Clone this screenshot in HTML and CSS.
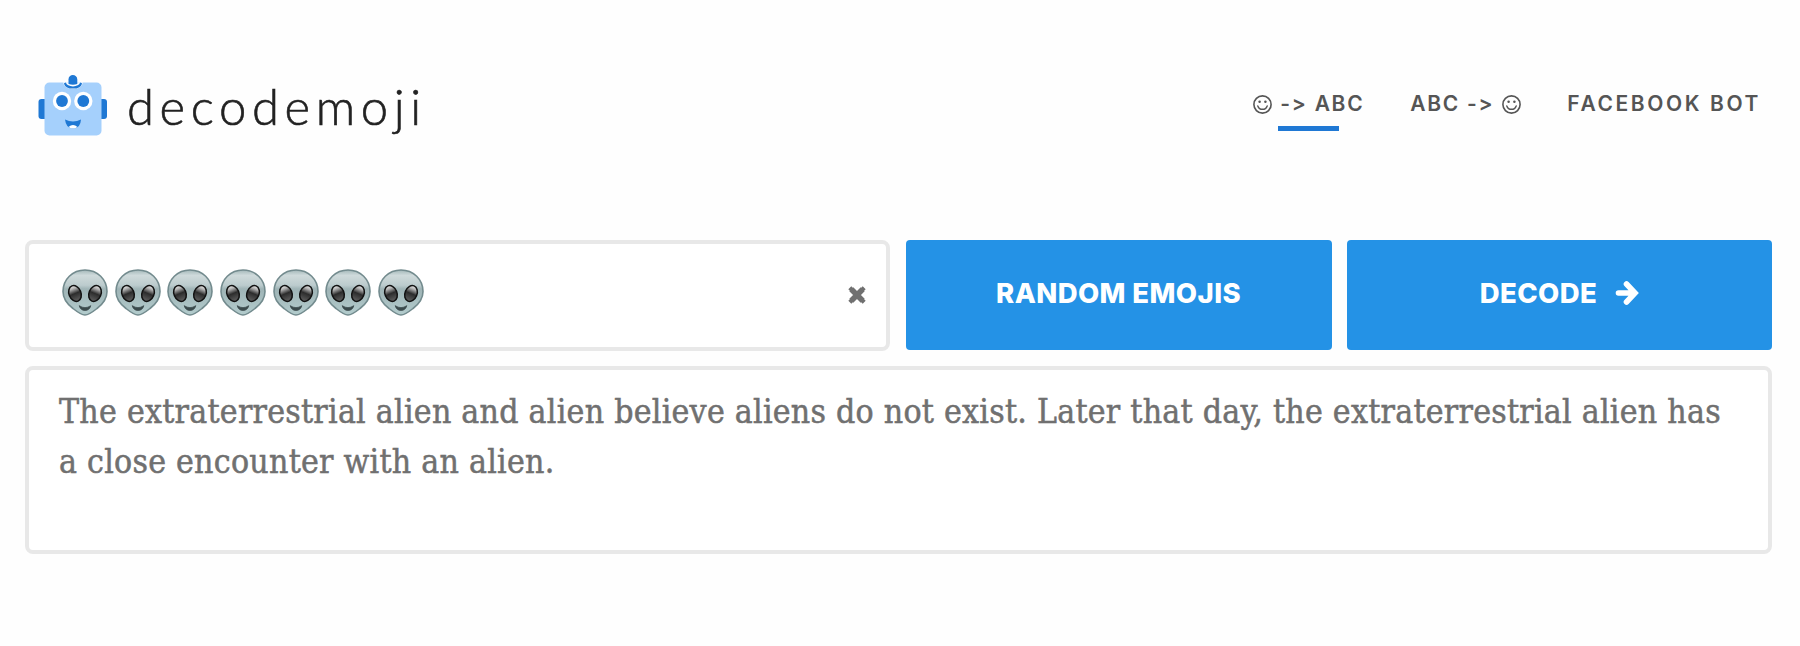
FILE: index.html
```html
<!DOCTYPE html>
<html lang="en">
<head>
    <meta charset="UTF-8">
    <meta name="viewport" content="width=device-width, initial-scale=1.0">
    <title>decodemoji</title>
    <link rel="stylesheet" href="styles.css">
</head>
<body>
    <svg class="sprite" width="0" height="0">
        <defs>
            <linearGradient id="skin" x1="0" y1="0" x2="0" y2="1">
                <stop offset="0" stop-color="#a3b7b9"/>
                <stop offset="0.12" stop-color="#cfdadb"/>
                <stop offset="0.34" stop-color="#bccbcd"/>
                <stop offset="0.42" stop-color="#9fb4b6"/>
                <stop offset="1" stop-color="#b3cccd"/>
            </linearGradient>
            <linearGradient id="eye" x1="0" y1="0" x2="0" y2="1">
                <stop offset="0" stop-color="#f0f0f0"/>
                <stop offset="0.2" stop-color="#b0b0b0"/>
                <stop offset="0.5" stop-color="#2c2c2c"/>
                <stop offset="1" stop-color="#606060"/>
            </linearGradient>
            <symbol id="alien" viewBox="0 0 46 47">
                <path d="M23 1C10.500 1 1 10.500 1 22.500C1 30 5 35 11 39.500C16 43.500 19.500 46 23 46C26.500 46 30 43.500 35 39.500C41 35 45 30 45 22.500C45 10.500 35.500 1 23 1Z" fill="url(#skin)" stroke="#738b8e" stroke-width="1.600"/>
                <ellipse cx="13" cy="24.500" rx="6" ry="8.200" transform="rotate(-22 13 24.500)" fill="url(#eye)" stroke="#111" stroke-width="1.500"/>
                <ellipse cx="33" cy="24.500" rx="6" ry="8.200" transform="rotate(22 33 24.500)" fill="url(#eye)" stroke="#111" stroke-width="1.500"/>
                <path d="M17.200 36.700Q23 40.600 28.800 36.700Q27.500 41.400 23 41.400Q18.500 41.400 17.200 36.700Z" fill="#3b4a4c" stroke="#3b4a4c" stroke-width="0.800" stroke-linejoin="round"/>
            </symbol>
            <symbol id="smiley" viewBox="0 0 19 19">
                <circle cx="9.500" cy="9.500" r="8.600" fill="none" stroke="#555" stroke-width="1.600"/>
                <circle cx="6.600" cy="6.800" r="1.250" fill="#555"/>
                <circle cx="12.400" cy="6.800" r="1.250" fill="#555"/>
                <path d="M4.800 10.900Q6 14.300 9.500 14.300Q13 14.300 14.200 10.900" fill="none" stroke="#555" stroke-width="1.400" stroke-linecap="round"/>
            </symbol>
        </defs>
    </svg>

    <header class="header">
        <a class="logo">
            <svg class="robot" width="70" height="62" viewBox="0 0 70 62">
                <rect x="0.500" y="24" width="9" height="20" rx="3" fill="#1f78d4"/>
                <rect x="60" y="24" width="9" height="20" rx="3" fill="#1f78d4"/>
                <rect x="6.500" y="7.500" width="57" height="53" rx="5" fill="#a5d0fc"/>
                <path d="M25 7.500H45C43.500 12 40 14 35 14C30 14 26.500 12 25 7.500Z" fill="#fff"/>
                <path d="M26.800 8C28 11.200 31 12.500 35 12.500C39 12.500 42 11.200 43.200 8" fill="none" stroke="#1f78d4" stroke-width="2.200"/>
                <path d="M30.500 9V4.500C30.500 1.500 32.500 0 34.800 0C37.200 0 39.300 1.500 39.300 4.500V9Q35 10.500 30.500 9Z" fill="#1f78d4"/>
                <circle cx="24" cy="26" r="9.200" fill="#fff"/>
                <circle cx="45.300" cy="26" r="9.200" fill="#fff"/>
                <circle cx="24" cy="26" r="5.900" fill="#1f78d4"/>
                <circle cx="45.300" cy="26" r="5.900" fill="#1f78d4"/>
                <path d="M27 44.500Q35 48.500 43 44.500Q42.500 53.500 35 53.500Q28 53.500 27 44.500Z" fill="#1f78d4"/>
                <path d="M30.500 52Q35 48 39.500 52Q35 55 30.500 52Z" fill="#fff"/>
            </svg>
            <span class="logo-text">decodemoji</span>
        </a>
        <nav class="nav">
            <a class="nav-item active"><svg class="smiley"><use href="#smiley"/></svg><span>-&gt; ABC</span></a>
            <a class="nav-item"><span>ABC -&gt;</span><svg class="smiley"><use href="#smiley"/></svg></a>
            <a class="nav-item nav-bot"><span>FACEBOOK BOT</span></a>
        </nav>
    </header>

    <main class="main">
        <div class="controls">
            <div class="emoji-input">
                <div class="emojis">
                    <svg><use href="#alien"/></svg>
                    <svg><use href="#alien"/></svg>
                    <svg><use href="#alien"/></svg>
                    <svg><use href="#alien"/></svg>
                    <svg><use href="#alien"/></svg>
                    <svg><use href="#alien"/></svg>
                    <svg><use href="#alien"/></svg>
                </div>
                <svg class="clear" width="18" height="18" viewBox="0 0 18 18">
                    <path d="M3.300 3.300L14.700 14.700M14.700 3.300L3.300 14.700" stroke="#707070" stroke-width="4.200" stroke-linecap="square"/>
                    <path d="M3.300 3.300L14.700 14.700M14.700 3.300L3.300 14.700" stroke="#707070" stroke-width="5.600"/>
                </svg>
            </div>
            <button class="btn btn-random">RANDOM EMOJIS</button>
            <button class="btn btn-decode">
                <span>DECODE</span>
                <svg width="24" height="26" viewBox="0 0 24 26">
                    <path d="M3.500 13H19M11.500 4L20 13L11.500 22" fill="none" stroke="#fff" stroke-width="5.600" stroke-linecap="round" stroke-linejoin="miter"/>
                </svg>
            </button>
        </div>
        <div class="result">The extraterrestrial alien and alien believe aliens do not exist. Later that day, the extraterrestrial alien has<br>a close encounter with an alien.</div>
    </main>
</body>
</html>
```
FILE: styles.css
```css
* {
    box-sizing: border-box;
}
body {
    margin: 0;
    background-color: #fefefe;
    font-family: Inter, "Liberation Sans", sans-serif;
}
.sprite {
    display: block;
}
.header {
    display: flex;
    justify-content: space-between;
    align-items: flex-start;
    height: 240px;
    padding: 75px 39px 0 38px;
}
.logo {
    display: flex;
}
.logo-text {
    margin-left: 19px;
    font-family: Lato, sans-serif;
    font-weight: 300;
    font-size: 49px;
    line-height: 63px;
    letter-spacing: 5.600px;
    color: #222;
    -webkit-text-stroke: 0.6px #222;
}
.nav {
    display: flex;
    padding-top: 16px;
    font-size: 21px;
    font-weight: 600;
    line-height: 26px;
    letter-spacing: 1.700px;
    color: #555;
    white-space: nowrap;
}
.nav-item {
    display: flex;
    align-items: center;
    gap: 8px;
    margin-left: 46px;
}
.nav-item.active {
    position: relative;
}
.nav-item.active::after {
    content: "";
    position: absolute;
    left: 25px;
    top: 35px;
    width: 61px;
    height: 5px;
    background-color: #1f78d4;
}
.nav-bot {
    letter-spacing: 2.600px;
}
.smiley {
    width: 19px;
    height: 19px;
}
.main {
    padding: 0 28px 0 25px;
}
.controls {
    display: grid;
    grid-template-columns: 865px 426px 425px;
    justify-content: space-between;
    height: 111px;
}
.emoji-input {
    display: flex;
    align-items: center;
    justify-content: space-between;
    padding: 0 20px 2px 33px;
    border: 4px solid #e8e8e8;
    border-radius: 8px;
    background-color: #fff;
}
.emojis {
    display: flex;
    gap: 6.700px;
    padding-bottom: 5px;
}
.emojis svg {
    width: 46px;
    height: 47px;
}
.btn {
    display: flex;
    align-items: center;
    justify-content: center;
    gap: 18px;
    height: 110px;
    padding: 0 0 4px;
    border: none;
    border-radius: 4px;
    background-color: #2492e6;
    color: #fff;
    font-family: inherit;
    font-size: 27.500px;
    font-weight: 800;
    letter-spacing: 0.4px;
    cursor: pointer;
}
.result {
    height: 188px;
    margin-top: 15px;
    padding: 17px 30px;
    border: 4px solid #e8e8e8;
    border-radius: 8px;
    background-color: #fff;
    color: #707070;
    font-family: "DejaVu Serif Condensed", "DejaVu Serif", serif;
    font-stretch: condensed;
    font-size: 33.500px;
    line-height: 50px;
    letter-spacing: 0.250px;
    white-space: nowrap;
    -webkit-text-stroke: 0.5px #707070;
}
```
